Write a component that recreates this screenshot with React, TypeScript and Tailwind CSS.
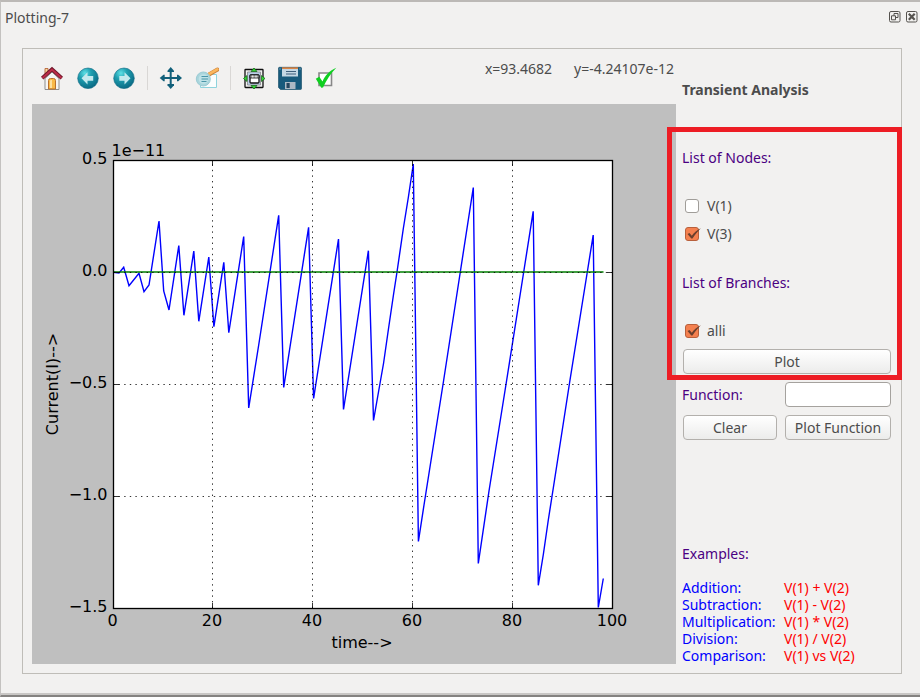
import { useState } from "react"
import type { ReactNode } from "react"

const xTicks = [
  { x: 113, label: "0" },
  { x: 212.5, label: "20" },
  { x: 312.5, label: "40" },
  { x: 412.5, label: "60" },
  { x: 512.5, label: "80" },
  { x: 612.5, label: "100" },
]

const yTicks = [
  { y: 160.5, label: "0.5" },
  { y: 272.5, label: "0.0" },
  { y: 384.5, label: "−0.5" },
  { y: 496.5, label: "−1.0" },
  { y: 608.5, label: "−1.5" },
]

// Branch current trace, in canvas units
const currentTrace = [
  "113,272.3 119,273 123.7,267.3 129,285.7 139,273.3 144,291.7 149,285 159,221 163.7,291 169,310",
  "178.8,245.5 183.9,315.3 193.8,251 198.8,321.3 208.8,257 213.9,326.7 223.8,262.3 228.8,332.7",
  "243.7,236.5 248.7,408 258.7,345 278.7,215.3 283.7,387.5 308.6,227.3 313.6,398.5 338.5,239 343.5,409.5",
  "368.4,250.7 373.5,420.5 378.5,392 383.6,363 388.6,328 393.6,294 397,272 403.4,228 408.4,197 413.3,164",
  "418.4,541.5 424,505 443.7,380 460.3,272 473.3,187.5 478.3,563.5 489,491 506.7,380 523.7,272 533.2,211.3",
  "538.3,585.3 543.4,554 548.3,520 553.3,488 570,380 587.3,272 593.2,235 598.3,607.5 603.3,578.5",
].join(" ")

const examples = [
  { name: "Addition:", formula: "V(1) + V(2)" },
  { name: "Subtraction:", formula: "V(1) - V(2)" },
  { name: "Multiplication:", formula: "V(1) * V(2)" },
  { name: "Division:", formula: "V(1) / V(2)" },
  { name: "Comparison:", formula: "V(1) vs V(2)" },
]

/**
 * Toolbar icons
 */
function HomeIcon() {
  return (
    <svg className="w-6 h-6" viewBox="0 0 24 24">
      <path d="M5 2.500h3v6H5z" fill="#f8d9a0" stroke="#b5653a" strokeWidth="0.900" />
      <path d="M5 12.500 12 6l7 6.500V23.500H5z" fill="#f6f5f3" stroke="#8d8d8d" />
      <path d="M8.500 23v-8.500q0-2 2-2h3q2 0 2 2v8.500z" fill="#f9b948" stroke="#b9702c" />
      <path d="M10 22v-7q0-1 1-1h1v8z" fill="#fde0a0" />
      <path d="M2.200 12.200 12 3.300l9.800 8.900" fill="none" stroke="#6f1528" strokeWidth="3.600" />
      <path d="M2.500 12 12 3.500l9.500 8.500" fill="none" stroke="#bb2c48" strokeWidth="2" />
    </svg>
  )
}

function ArrowIcon({ forward = false }: { forward?: boolean }) {
  const id = forward ? "ball-forward" : "ball-back"
  return (
    <svg className="w-6 h-6" viewBox="0 0 24 24">
      <defs>
        <radialGradient id={id} cx="0.35" cy="0.25" r="0.75">
          <stop offset="0" stopColor="#5fe0e6" />
          <stop offset="0.4" stopColor="#1f9fb0" />
          <stop offset="1" stopColor="#0b6c86" />
        </radialGradient>
      </defs>
      <circle cx="12" cy="12.300" r="10.300" fill={`url(#${id})`} stroke="#0a6781" strokeWidth="0.600" />
      <path
        d={forward ? "M18.500 12.300 12.500 6.300v3.700H7.300v4.700h5.200v3.700z" : "M5.500 12.300l6-6v3.700h5.700v4.700h-5.700v3.700z"}
        fill="#c3e9ee"
      />
    </svg>
  )
}

function PanIcon() {
  return (
    <svg className="w-6 h-6" viewBox="0 0 24 24" fill="#12607a">
      <path d="M10.700 4h2v16h-2z" />
      <path d="M4 11h16v2H4z" />
      <path d="M11.700 1 15 4.800v1.200H8.500V4.800z" />
      <path d="M11.700 23l3.300-3.800V18H8.500v1.200z" />
      <path d="M.7 12l3.800-3.300h1.200v6.600H4.500z" />
      <path d="M23 12l-3.800-3.300H18v6.600h1.200z" />
    </svg>
  )
}

function ZoomIcon() {
  return (
    <svg className="w-6 h-6" viewBox="0 0 24 24">
      <path d="M5.500 8.500h16v13h-16z" fill="#fbfdfd" stroke="#8fd3dd" />
      <path d="M14 8.500 22.500 3.500" stroke="#c9803c" strokeWidth="4" strokeLinecap="round" />
      <path d="M14 8.200 22.300 3.300" stroke="#fbb65c" strokeWidth="2.600" strokeLinecap="round" />
      <circle cx="8.300" cy="13" r="7" fill="#a9d5dc" stroke="#9ccbd4" />
      <circle cx="8.500" cy="13" r="4.800" fill="#bfe2e7" />
      <path d="M6.500 10.500h6.500M6.500 13h6.500M6.500 15.500h5" stroke="#4996a8" strokeWidth="1.200" />
    </svg>
  )
}

function SubplotsIcon() {
  return (
    <svg className="w-6 h-6" viewBox="0 0 24 24">
      <rect x="3" y="3.500" width="18" height="18" rx="0.500" fill="#f1f1f1" stroke="#111" strokeWidth="1.300" />
      <path d="M5.500 6h13v13h-13z" fill="#b9cfe8" stroke="#888" strokeWidth="0.800" />
      <rect x="8" y="9" width="9" height="8" rx="1" fill="#fff" stroke="#111" strokeWidth="1.300" />
      <path d="M8 9h9v3H8z" fill="#aaa" stroke="#111" strokeWidth="0.800" />
      <path d="M10.800 9.500v2M14 9.500v2" stroke="#fff" />
      <g fill="#35d435" stroke="#0d5d12" strokeWidth="0.700">
        <path d="M12 2 15 5.500H9z" />
        <path d="M12 23 15 19.500H9z" />
        <path d="M1.500 12.500 5 9.500v6z" />
        <path d="M23 12.500 19.500 9.500v6z" />
      </g>
    </svg>
  )
}

function SaveIcon() {
  return (
    <svg className="w-6 h-6" viewBox="0 0 24 24">
      <path d="M1.500 1.300h21q1 0 1 1v20.200q0 1-1 1H2.500L.5 21.500V2.300q0-1 1-1z" fill="#175a7c" stroke="#0f4663" strokeWidth="0.600" />
      <path d="M4 2h16v8.500H4z" fill="#c3d7e4" />
      <path d="M4 1.300h16v1.700H4z" fill="#d98547" />
      <path d="M8 5.500h10M8 8h10" stroke="#3d5f7c" strokeWidth="1.200" />
      <path d="M7 16h10.500v7H7z" fill="#adb9c4" />
      <path d="M8.500 17h3.200v5H8.500z" fill="#24465f" />
      <path d="M1.500 3h1M21.500 3h1" stroke="#b9d4e2" />
    </svg>
  )
}

function OptionsIcon() {
  return (
    <svg className="w-6 h-6" viewBox="0 0 24 24">
      <path d="M5 7h12.500v12.500H5z" fill="#fff" stroke="#888" strokeWidth="1.600" />
      <path d="M1.800 12.800 5.300 10.800 8.500 15.500C11 9.500 15.500 4.500 22.300 1.700 17 7 12.500 14 9 21.500L7.300 21.700z" fill="#0fcf20" />
    </svg>
  )
}

/**
 * Single toolbar button, the label is only for assistive tech
 */
function ToolButton({ label, children }: { label: string; children: ReactNode }) {
  return (
    <button type="button" aria-label={label} className="block w-6 h-6">
      {children}
    </button>
  )
}

function Separator() {
  return <div className="w-px h-6 bg-[#d9d7d5]" />
}

function Toolbar() {
  return (
    <div className="flex items-start justify-between h-[55px] pl-2 pr-[2px]">
      <div className="flex gap-[11px] pt-[17px]">
        <div className="flex gap-3">
          <ToolButton label="Home"><HomeIcon /></ToolButton>
          <ToolButton label="Back"><ArrowIcon /></ToolButton>
          <ToolButton label="Forward"><ArrowIcon forward /></ToolButton>
        </div>
        <Separator />
        <div className="flex gap-3">
          <ToolButton label="Pan"><PanIcon /></ToolButton>
          <ToolButton label="Zoom"><ZoomIcon /></ToolButton>
        </div>
        <Separator />
        <div className="flex gap-3">
          <ToolButton label="Configure subplots"><SubplotsIcon /></ToolButton>
          <ToolButton label="Save"><SaveIcon /></ToolButton>
          <ToolButton label="Edit options"><OptionsIcon /></ToolButton>
        </div>
      </div>
      <div className="flex gap-[22px] pt-[10px] leading-5 whitespace-nowrap">
        <span>x=93.4682</span>
        <span>y=-4.24107e-12</span>
      </div>
    </div>
  )
}

/**
 * Plot canvas with axes, grid and both traces
 */
function PlotCanvas() {
  return (
    <svg className="block w-full bg-[#bfbfbf]" viewBox="32 104 644 560" fontFamily="'DejaVu Sans', sans-serif" fontSize="16">
      <rect x="113" y="160.500" width="499.500" height="448" fill="#fff" />

      {/* Traces */}
      <polyline points={currentTrace} fill="none" stroke="#0000ff" strokeWidth="1.400" />
      <path d="M113 272H603.500" stroke="#007f00" strokeWidth="1.500" />

      {/* Grid and tick marks */}
      {xTicks.slice(1, -1).map((tick) => (
        <g key={tick.label} stroke="#000">
          <path d={`M${tick.x} 608V161`} strokeWidth="0.800" strokeDasharray="1.400 4.200" />
          <path d={`M${tick.x} 608v-5M${tick.x} 161v5`} strokeWidth="0.800" />
        </g>
      ))}
      {yTicks.slice(1, -1).map((tick) => (
        <g key={tick.label} stroke="#000">
          <path d={`M113 ${tick.y}H612`} strokeWidth="0.800" strokeDasharray="1.400 4.200" />
          <path d={`M113 ${tick.y}h6M612 ${tick.y}h-5`} strokeWidth="0.800" />
        </g>
      ))}
      <rect x="113.500" y="160.500" width="499" height="448" fill="none" stroke="#000" strokeWidth="1.300" />

      {/* Labels */}
      {xTicks.map((tick) => (
        <text key={tick.label} x={tick.x - 0.5} y="626" textAnchor="middle">{tick.label}</text>
      ))}
      {yTicks.map((tick) => (
        <text key={tick.label} x="107.500" y={tick.y + 3.5} textAnchor="end">{tick.label}</text>
      ))}
      <text x="111.500" y="156">1e−11</text>
      <text x="362" y="648" textAnchor="middle">time--&gt;</text>
      <text transform="translate(58 384) rotate(-90)" textAnchor="middle">Current(I)--&gt;</text>
    </svg>
  )
}

function CheckRow({ label, initial = false }: { label: string; initial?: boolean }) {
  const [checked, setChecked] = useState(initial)
  return (
    <label className="flex items-center gap-2 pl-[3px] leading-5">
      <span className="relative block w-[14px] h-[14px]">
        <input
          type="checkbox"
          checked={checked}
          onChange={(e) => setChecked(e.target.checked)}
          className="block w-[14px] h-[14px] appearance-none rounded-[3px] border border-[#a09d99] bg-white checked:border-[#b8603c] checked:bg-[#f4804f]"
        />
        {checked && (
          <svg className="absolute left-0 top-0 w-4 h-[14px] pointer-events-none" viewBox="0 0 16 14">
            <path d="M2.500 7 4.500 6 6.800 8.800C9 5.500 12 3 15.900 1.200 12.500 4.500 10 7.500 7.500 11.500H6.300z" fill="#6b3f2d" />
          </svg>
        )}
      </span>
      {label}
    </label>
  )
}

function PushButton({ children }: { children: ReactNode }) {
  return (
    <button
      type="button"
      className="w-full h-[25px] rounded border border-[#b3b0ac] bg-linear-to-b from-white to-[#ececeb] leading-5 whitespace-nowrap"
    >
      {children}
    </button>
  )
}

function SidePanel() {
  return (
    <div className="flex flex-col w-[209px] shrink-0 pt-[31px]">
      <h2 className="font-bold leading-5">Transient Analysis</h2>

      {/* Highlighted selection block */}
      <div className="relative mt-12">
        <div className="text-[#4b0082] leading-5">List of Nodes:</div>
        <div className="flex flex-col gap-2 mt-7">
          <CheckRow label="V(1)" />
          <CheckRow label="V(3)" initial />
        </div>
        <div className="mt-[29px] text-[#4b0082] leading-5">List of Branches:</div>
        <div className="mt-7">
          <CheckRow label="alli" initial />
        </div>
        <div className="mt-2 pl-px">
          <PushButton>Plot</PushButton>
        </div>
        <div className="absolute -left-[15px] -right-[11px] -top-[21px] -bottom-[6px] border-5 border-[#ed1c24] pointer-events-none" />
      </div>

      <div className="grid grid-cols-[95px_1fr] items-center gap-2 mt-2">
        <label htmlFor="function" className="text-[#4b0082]">Function:</label>
        <input id="function" type="text" className="w-full h-[25px] px-1 rounded border border-[#a5a29e] bg-white" />
        <div className="pl-px">
          <PushButton>Clear</PushButton>
        </div>
        <PushButton>Plot Function</PushButton>
      </div>

      <div className="mt-auto text-[#4b0082] leading-5">Examples:</div>
      <table className="mt-[15px] leading-[17px] text-left">
        <tbody>
          {examples.map((example) => (
            <tr key={example.name}>
              <th scope="row" className="w-[102px] p-0 font-normal text-[#0000ff]">{example.name}</th>
              <td className="p-0 text-[#ff0000] whitespace-nowrap">{example.formula}</td>
            </tr>
          ))}
        </tbody>
      </table>
    </div>
  )
}

function TitleBar() {
  return (
    <div className="flex items-center justify-between h-[30px] pl-1 pr-[2px]">
      <h1>Plotting-7</h1>
      <div className="flex gap-[5px]">
        <button type="button" aria-label="Float">
          <svg className="block w-3 h-3" viewBox="0 0 12 12" fill="none" stroke="#55524e">
            <rect x="0.500" y="0.500" width="10.500" height="10.500" rx="1.500" />
            <path d="M5 2.500h4v4H5z" />
            <path d="M2.500 4.800h4v4h-4z" fill="#f2f1f0" />
          </svg>
        </button>
        <button type="button" aria-label="Close">
          <svg className="block w-3 h-3" viewBox="0 0 12 12" fill="none" stroke="#55524e">
            <rect x="0.500" y="0.500" width="10.500" height="10.500" rx="1.500" />
            <path d="M2.800 2.800 8.700 8.700M8.700 2.800 2.800 8.700" strokeWidth="2.200" />
          </svg>
        </button>
      </div>
    </div>
  )
}

export default function App() {
  return (
    <div className="flex flex-col min-h-screen bg-[#f2f1f0] border-t-2 border-l border-b-2 border-t-[#bcb9b6] border-l-[#c4c2c0] border-b-[#858381] font-['Noto_Sans','Open_Sans',sans-serif] text-[14px] text-[#4c4c4c]">
      <div className="flex-1 border-b-2 border-[#c9c7c5]">
        <TitleBar />
        <div className="flex gap-[6px] mt-4 ml-[21px] mr-[18px] mb-[19px] pl-[9px] pr-[10px] pb-[9px] border border-[#bfbdb8]">
          <div className="flex-1 min-w-0">
            <Toolbar />
            <PlotCanvas />
          </div>
          <SidePanel />
        </div>
      </div>
    </div>
  )
}
